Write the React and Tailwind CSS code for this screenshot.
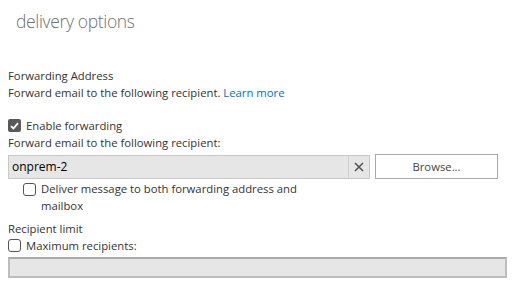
import React from "react";

const font = { fontFamily: '"Open Sans", "Noto Sans", sans-serif' };

const CheckBox = ({ checked }) =>
  checked ? (
    <span className="flex h-[13px] w-[13px] items-center justify-center rounded-[2px] bg-[#5a5a5a]">
      <svg width="9" height="8" viewBox="0 0 9 8" fill="none">
        <path d="M1 4.2 L3.4 6.5 L8 1.2" stroke="#fff" strokeWidth="1.8" />
      </svg>
    </span>
  ) : (
    <span className="block h-[13px] w-[13px] rounded-[3px] border border-[#555] bg-white" />
  );

export default function App() {
  return (
    <div
      className="h-[284px] w-[517px] overflow-hidden bg-white text-[11.3px] leading-[17px] text-[#333]"
      style={font}
    >
      <h1 className="pl-[16px] pt-[8px] text-[17.5px] font-light leading-[26px] tracking-[-0.35px] text-[#707070]">
        delivery options
      </h1>

      <div className="pl-[8px] pt-[33px]">
        <p>Forwarding Address</p>
        <p>
          Forward email to the following recipient.{" "}
          <a className="text-[#0072c6]">Learn more</a>
        </p>

        <label className="mt-[16px] flex items-center gap-[5px]">
          <CheckBox checked />
          <span>Enable forwarding</span>
        </label>
        <p>Forward email to the following recipient:</p>

        <div className="mt-[3px] flex items-center">
          <div className="flex h-[24px] w-[362px] items-center border border-[#c8c8c8] bg-[#e6e6e6]">
            <span className="flex-1 pl-[3px] text-[12px] text-black">onprem-2</span>
            <span className="flex h-full w-[21px] items-center justify-center border-l border-[#d0d0d0]">
              <svg width="10" height="10" viewBox="0 0 10 10">
                <path d="M1 1 L9 9 M9 1 L1 9" stroke="#555" strokeWidth="1.6" />
              </svg>
            </span>
          </div>
          <button className="ml-[5px] h-[25px] w-[123px] border border-[#a8a8a8] bg-white text-[#444]">
            Browse...
          </button>
        </div>

        <label className="mt-[1px] flex items-start gap-[5px] pl-[15px]">
          <span className="mt-[3px]">
            <CheckBox />
          </span>
          <span className="w-[262px]">
            Deliver message to both forwarding address and mailbox
          </span>
        </label>

        <p className="mt-[6px]">Recipient limit</p>
        <label className="flex items-center gap-[5px]">
          <CheckBox />
          <span>Maximum recipients:</span>
        </label>
        <div className="mt-[3px] h-[21px] w-[499px] border-2 border-[#bdbdbd] border-t-[#aaa] bg-[#e6e6e6]" />
      </div>
    </div>
  );
}
